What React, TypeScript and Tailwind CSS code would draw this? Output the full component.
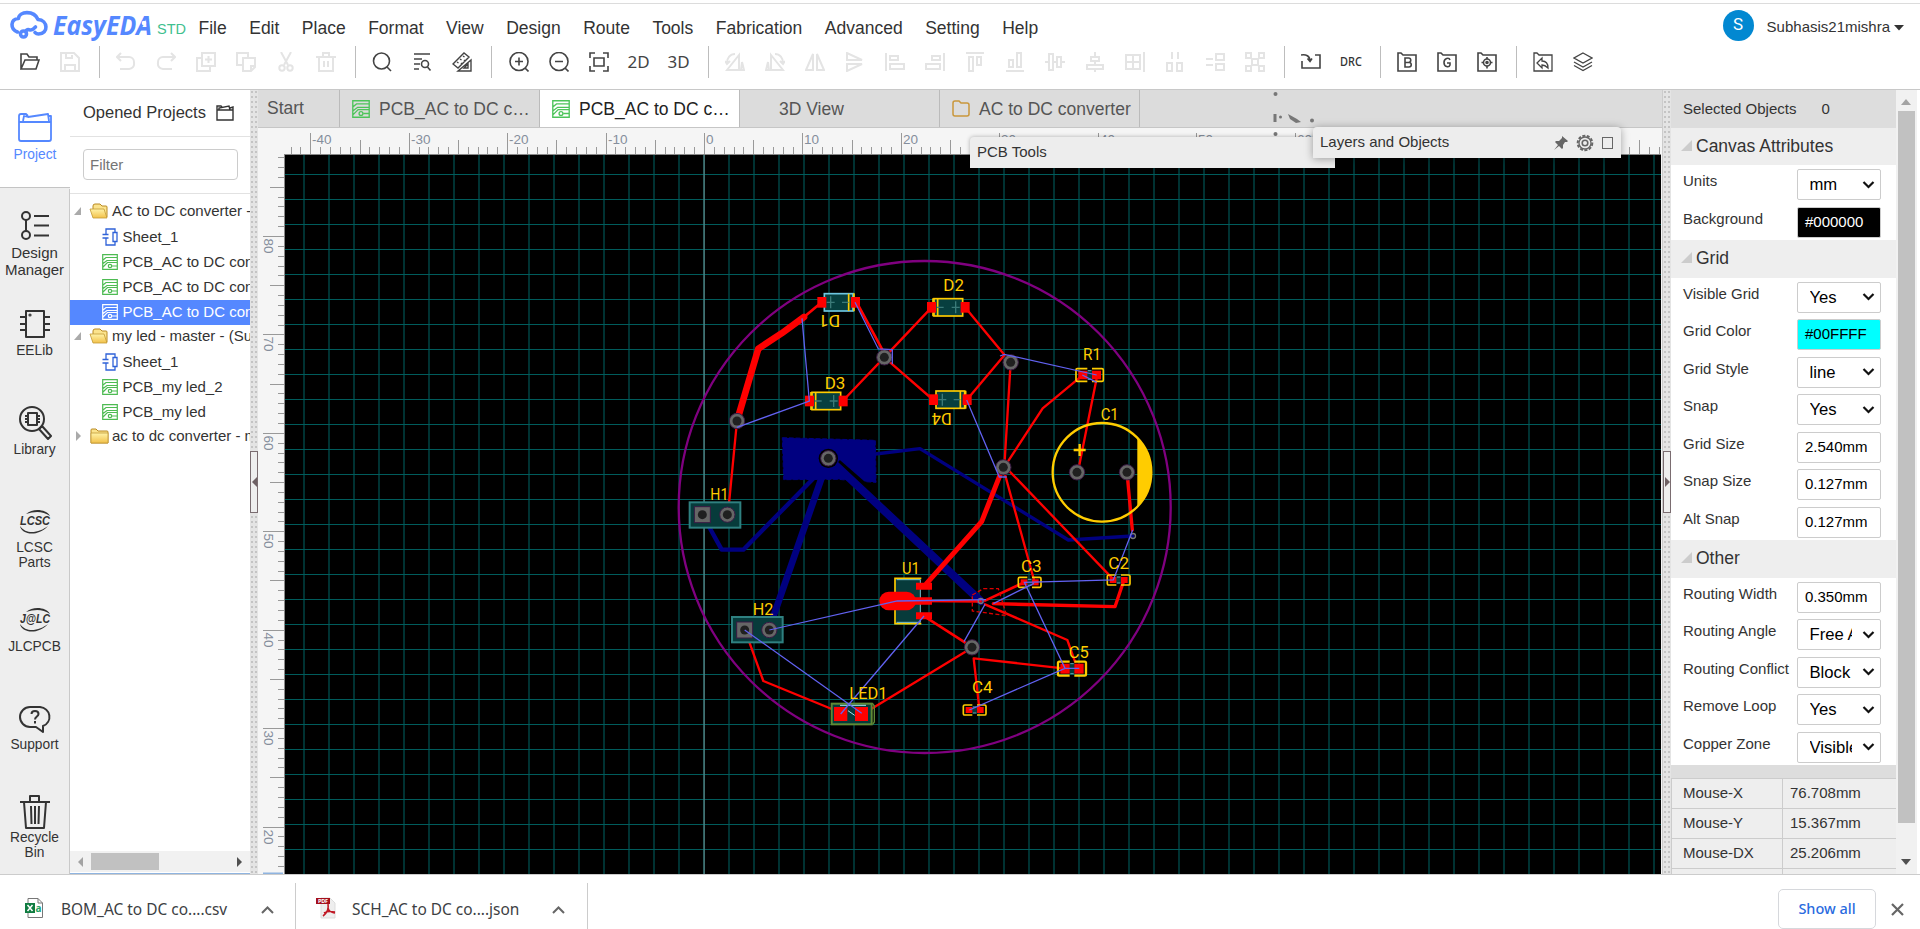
import React, { ReactNode } from 'react';

const menus = ['File', 'Edit', 'Place', 'Format', 'View', 'Design', 'Route', 'Tools', 'Fabrication', 'Advanced', 'Setting', 'Help'];

function Ico({ children, off = false }: { children: ReactNode; off?: boolean }) {
  return (
    <div className={`flex h-8 w-10 items-center justify-center ${off ? 'text-[#e4e4e4]' : 'text-[#444]'}`}>
      <svg width="20" height="20" viewBox="0 0 20 20" fill="none" stroke="currentColor" strokeWidth={off ? 2 : 1.6}>
        {children}
      </svg>
    </div>
  );
}

function Divider() {
  return <div className="mr-[6.2px] ml-[9px] h-8 w-px bg-[#bdbdbd]" />;
}

function Toolbar() {
  return (
    <div className="flex h-[44px] items-start pl-[10px]">
      <Ico><path d="M1 17V2h6l2 3h8v3M1 17l4-9h14l-3 9z" /></Ico>
      <Ico off><path d="M1 1h13l5 5v13H1zM5 19v-6h10v6M6 1v5h6V3" /></Ico>
      <Divider />
      <Ico off><path d="M5 1 1 5l4 4M1 5h12a5 5 0 0 1 5 5v1a5 5 0 0 1-5 6H4" /></Ico>
      <Ico off><path d="m15 1 4 4-4 4M19 5H7a5 5 0 0 0-5 5v1a5 5 0 0 0 5 6h9" /></Ico>
      <Ico off><path d="M6 1h13v13H6zM6 6H1v13h13v-5M12.500 4v7M9 7.500h7" /></Ico>
      <Ico off><path d="M12 6V1H1v12h6M7 6h12v9l-4 4H7zM19 14h-4v5" /></Ico>
      <Ico off><path d="M5 0l7 13M15 0L8 13" /><circle cx="6" cy="16" r="2.700" /><circle cx="14" cy="16" r="2.700" /></Ico>
      <Ico off><path d="M0 5h20M7 5V1h6v4M3 5v14h14V5M8 9v6M12 9v6" /></Ico>
      <Divider />
      <Ico><circle cx="9.500" cy="9" r="8" /><path d="m15 15 4 4" /></Ico>
      <Ico><path d="M2 2h16M2 7h8M2 12h6M2 17h5" /><circle cx="13" cy="12" r="3.500" /><path d="m15.500 15 3 3.500" /></Ico>
      <Ico><path d="M1 12 12 1l5 4L6 16zM6 19h13V8zM12 16h4v-4zM5 10l1.500 1M8 7l1.500 1M11 4l1.500 1M9 11l1 1M12 8l1 1" strokeWidth="1.400" /></Ico>
      <Divider />
      <Ico><circle cx="10" cy="9.500" r="9" /><path d="m16 16 3.500 3.500M10 5.500v8M6 9.500h8" /></Ico>
      <Ico><circle cx="10" cy="9.500" r="9" /><path d="m16 16 3.500 3.500M6 9.500h8" /></Ico>
      <Ico><path d="M1 6V1h5M14 1h5v5M19 14v5h-5M6 19H1v-5M5 6h10v8H5z" /></Ico>
      <div className="flex h-8 w-10 items-center justify-center font-['Noto_Sans'] text-[17px] text-[#444]">2D</div>
      <div className="flex h-8 w-10 items-center justify-center font-['Noto_Sans'] text-[17px] text-[#444]">3D</div>
      <Divider />
      <Ico off><path d="M14 3v15H2zM17 10l2 8h-3zM2 11c0-5 3-9 8-9M0 9l2 3 3-3" /></Ico>
      <Ico off><path d="M6 3v15h12zM3 10l-2 8h3zM18 11c0-5-3-9-8-9M20 9l-2 3-3-3" /></Ico>
      <Ico off><path d="M8 2v16H1zM12 2v16h7z" /></Ico>
      <Ico off><path d="M2 8V1l15 7zM2 12v7l15-7z" /></Ico>
      <Ico off><path d="M1 1v18M5 4h8v4H5zM5 12h14v5H5z" /></Ico>
      <Ico off><path d="M19 1v18M7 4h8v4H7zM1 12h14v5H1z" /></Ico>
      <Ico off><path d="M1 1h18M4 5v14h4V5zM12 5v8h4V5z" /></Ico>
      <Ico off><path d="M1 19h18M12 1v14h4V1zM4 8v7h4V8z" /></Ico>
      <Ico off><path d="M4 2v16h4V2zM12 5v10h4V5zM0 10h4M8 10h4M16 10h4" /></Ico>
      <Ico off><path d="M6 5h8v4H6zM2 13h16v4H2zM10 0v5M10 9v4M10 17v3" /></Ico>
      <Ico off><path d="M1 3h14v14H1zM1 10h14M8 3v14M19 0v20" /></Ico>
      <Ico off><path d="M2 11h5v8H2zM12 11h5v8h-5zM7 0v7M13 0v7" /></Ico>
      <Ico off><path d="M11 2h8v6h-8zM11 12h8v6h-8zM1 7h7M1 13h7" /></Ico>
      <Ico off><path d="M1 1h5v5H1zM14 1h5v5h-5zM1 14h5v5H1zM14 14h5v5h-5zM7 7h6v6H7zM6 6l1 1M14 6l-1 1M6 14l1-1M14 14l-1-1" /></Ico>
      <Divider />
      <Ico><path d="M1 9v7h18V3h-5M0 3c5-1 9 1 9 6M6.500 6.500 9 9.500l2-3" /></Ico>
      <div className="flex h-8 w-10 items-center justify-center"><span className="inline-block origin-center scale-x-[0.84] font-['Noto_Sans'] text-[13px] font-medium text-[#333]">DRC</span></div>
      <Divider />
      <Ico><path d="M1 19V1h3l2 2h13v16zM8 6h3.500a2 2 0 0 1 0 4.500H8zM8 10.500h4a2 2 0 0 1 0 4.500H8z" /></Ico>
      <Ico><path d="M1 19V1h3l2 2h13v16zM13 8c-1-3-6-2-6 2.500s5 5.500 6 2.500v-2h-3" /></Ico>
      <Ico><path d="M1 19V1h3l2 2h13v16zM10 5v2M10 14v2.500M4.500 10.500h2M13.500 10.500h2" /><circle cx="10" cy="10.500" r="3.500" /><circle cx="10" cy="10.500" r="1" fill="currentColor" /></Ico>
      <Divider />
      <Ico><path d="M1 19V1h3l2 2h13v16zM9 6v3c4 0 6 3 6 7-2-2-3-3-6-3v3l-5-5z" strokeWidth="1.300" /></Ico>
      <Ico><path d="m10 1 9 5-9 5-9-5zM1 10l9 5 9-5M1 13.500l9 5 9-5" strokeWidth="1.300" /></Ico>
    </div>
  );
}

function Header() {
  return (
    <header className="h-[90px] shrink-0 border-b border-[#c8c8c8]">
      <div className="mt-[3px] flex h-[43px] border-t border-[#dcdcdc]">
        <svg width="191" height="41" viewBox="0 4 191 41" className="shrink-0">
          <g fill="none" stroke="#5588ff" strokeWidth="3.600" strokeLinecap="round" strokeLinejoin="round">
            <path d="M17.500 32C10 29 10 19 18.500 18.500C19 11 34 10 38 19.500C48 20 49 34 38.500 34Q36.500 34 35 32.500" />
            <circle cx="23.500" cy="34" r="3" />
            <path d="M25.500 31.500Q27 28.500 30 30Q32 30.500 35.500 27" />
          </g>
          <text x="53" y="34.500" textLength="99" lengthAdjust="spacingAndGlyphs" className="fill-[#5588ff] font-['Open_Sans'] text-[27px] font-bold italic">EasyEDA</text>
          <circle cx="144" cy="23" r="2.300" fill="#fff" />
          <text x="157" y="34" className="fill-[#3fc08f] font-['Liberation_Sans'] text-[14.5px]">STD</text>
        </svg>
        <nav className="flex gap-[22.5px] pt-[12px] pl-[7.5px] text-[17.5px] leading-[24px] text-[#333]">
          {menus.map((m) => <span key={m}>{m}</span>)}
        </nav>
        <div className="mt-[5px] mr-[16px] ml-auto flex h-8 items-center">
          <span className="flex size-[31px] items-center justify-center rounded-full bg-[#0288d1] font-['Roboto'] text-[17px] text-white">S</span>
          <span className="ml-[13px] pt-1 text-[15px] text-[#333]">Subhasis21mishra</span>
          <svg width="10" height="6" className="mt-[5px] ml-[4px]"><path d="M0 0h10L5 5.500z" fill="#333" /></svg>
        </div>
      </div>
      <Toolbar />
    </header>
  );
}

const line = 'flex flex-col items-center';
function NavItem({ pad, label, icon, sel, cls = 'text-[13.75px] leading-[15px]' }: { pad: string; label: string[]; icon: ReactNode; sel?: boolean; cls?: string }) {
  return (
    <div className={`${line} ${pad} h-[98px] ${sel ? 'mb-px -mt-px border-b border-[#c4c4c4] bg-white text-[#5588ff]' : 'border-r border-[#c9c9c9] text-[#333]'}`}>
      {icon}
      {label.map((l) => <span key={l} className={cls}>{l}</span>)}
    </div>
  );
}
const S = ({ w, h, children, mb }: { w: number; h: number; children: ReactNode; mb: string }) => (
  <svg width={w} height={h} viewBox={`0 0 ${w} ${h}`} fill="none" stroke="currentColor" strokeWidth="2" strokeLinejoin="round" className={`shrink-0 ${mb}`}>{children}</svg>
);

function SideNav() {
  return (
    <div className="w-[70px] shrink-0 bg-[#eee] pt-px">
      <NavItem sel pad="pt-[22px]" label={['Project']} icon={<S w={36} h={31} mb="mb-[4px]"><path d="M2 10V4q0-2 2-2h5l2 2M2 10h32v17q0 2-2 2H4q-2 0-2-2zM6 9l1-5 4 1 20-3 1 7M32 4h2v6" strokeWidth="1.800" /></S>} />
      <NavItem pad="pt-[22px]" label={['Design', 'Manager']} cls="text-[15px] leading-[17px]" icon={<S w={30} h={30} mb="mb-[3px]"><circle cx="6" cy="5" r="4" /><circle cx="6" cy="24" r="4" /><path d="M6 9v11M14 5h15M14 14.500h15M14 24.500h15" /></S>} />
      <NavItem pad="pt-[22px]" label={['EELib']} icon={<S w={32} h={30} mb="mb-[4px]"><path d="M7 2h18v26H7zM1 8h6M1 15h6M1 21h6M25 8h6M25 15h6M25 21h6" /><circle cx="11" cy="6" r=".6" /></S>} />
      <NavItem pad="pt-[20px]" label={['Library']} icon={<S w={34} h={36} mb="mb-[1px]"><circle cx="14" cy="14" r="12" /><path d="M10 8h9v12h-9zM7 11h3M7 14h3M7 17h3M19 11h3M19 14h3M19 17h3M21 24l3-3 9 10-3 3z" /></S>} />
      <NavItem pad="pt-[27px]" label={['LCSC', 'Parts']} icon={<Orbit t="LCSC" mb="mb-[5px]" />} />
      <NavItem pad="pt-[27px]" label={['JLCPCB']} icon={<Orbit t="J@LC" mb="mb-[6px]" />} />
      <NavItem pad="pt-[26px]" label={['Support']} icon={<S w={34} h={29} mb="mb-[3px]"><path d="M12 2h10a11 10 0 0 1 3 19v6l-7-5h-6a10 10 0 0 1 0-20z" /><path d="M13.500 9c0-4 7-4 7 0 0 2.500-3.500 2.500-3.500 5.500M17 16v2.500" /></S>} />
      <NavItem pad="pt-[17px]" label={['Recycle', 'Bin']} icon={<S w={32} h={36} mb="mb-0"><path d="M1 8h30M11 8V2h9v6M5 8l2 26h18l2-26M12 12l.5 18M16 12v18M20 12l-.5 18" /></S>} />
    </div>
  );
}

function Orbit({ t, mb }: { t: string; mb: string }) {
  return (
    <svg width="32" height="25" viewBox="0 0 32 25" className={mb}>
      <path d="M7 4C14-2 27-1 31 6 24 1 16 1 7 4zM1 16c1 8 17 12 28 0-8 6-21 10-28 0z" fill="#333" />
      <text x="1" y="15" textLength="30" lengthAdjust="spacingAndGlyphs" className="fill-[#333] font-['Liberation_Sans'] text-[12.5px] font-bold italic">{t}</text>
    </svg>
  );
}

function PcbIcon({ c, s = 16 }: { c: string; s?: number }) {
  return (
    <svg width={s} height={s} viewBox="0 0 16 16" fill="none" stroke={c} strokeWidth="1.200" className="shrink-0">
      <path d="M.7.7h14.600v14.600H.700zM1 6l3-2.500h11M1 9.500 5 6.500h10M1 13l4.500-4.500H15M10 12h5" /><circle cx="8" cy="12" r="1.700" />
    </svg>
  );
}
function SheetIcon() {
  return (
    <svg width="16" height="18" viewBox="0 0 16 18" fill="none" stroke="#2f62d8" strokeWidth="1.300" className="shrink-0">
      <path d="M11 4.500h4v9h-4zM13 4V1H4v5.500M.500 6.500h6M.500 10h6M4 10v7h9v-3" />
    </svg>
  );
}
function Folder({ open }: { open?: boolean }) {
  return (
    <svg width="20" height="16" viewBox="0 0 20 16" className="shrink-0">
      <defs><linearGradient id="fg" x1="0" x2="0" y1="0" y2="1"><stop offset="0" stopColor="#fff3a8" /><stop offset="1" stopColor="#f2c14a" /></linearGradient></defs>
      <path d={open ? 'M4 13V3q0-2 2-2h5l2 2h4q1 0 1 1v10z' : 'M2 15V2q0-1 1-1h4l2 2h9q1 0 1 1v11z'} fill="#fbe38d" stroke="#b98a22" />
      <path d={open ? 'M1 6h14l3 9H4z' : 'M2 5h17v10H2z'} fill="url(#fg)" stroke="#c39a35" strokeWidth=".8" />
    </svg>
  );
}

const tree = [
  ['o', 'AC to DC converter - master'], ['s', 'Sheet_1'], ['p', 'PCB_AC to DC converter'], ['p', 'PCB_AC to DC converter'], ['a', 'PCB_AC to DC converter'],
  ['o', 'my led - master - (Subhasis)'], ['s', 'Sheet_1'], ['p', 'PCB_my led_2'], ['p', 'PCB_my led'], ['c', 'ac to dc converter - master'],
];

function ProjectPanel() {
  return (
    <div className="flex w-[180px] shrink-0 flex-col overflow-hidden border-b border-[#8fb4e0] bg-white">
      <div className="flex h-[47px] items-center border-b border-[#e2e2e2] pb-[2px] pl-[13px]">
        <span className="text-[16.5px] text-[#333]">Opened Projects</span>
        <svg width="18" height="16" viewBox="0 0 18 16" className="mt-[2px] ml-[10px]" fill="none" stroke="#333" strokeWidth="1.400"><path d="M1 5h16v10H1zM1 5V1h4l1 1M3 5V3l10-2 1 4M14 3l3-1v3" /></svg>
      </div>
      <div className="h-[57px] shrink-0 border-b border-[#e2e2e2] pt-[12px] pl-[13px]">
        <div className="h-[31px] w-[155px] rounded-[4px] border border-[#ccc] pl-[6px] text-[15px] leading-[29px] text-[#757575]">Filter</div>
      </div>
      <div className="flex-1 pt-[6px]">
        {tree.map(([k, t], i) => {
          const root = k === 'o' || k === 'c';
          return (
            <div key={i} className={`flex h-[25px] items-center whitespace-nowrap text-[15px] ${k === 'a' ? 'bg-[#5588ff] text-white' : 'text-[#333]'} ${root ? 'pb-[3px] pl-[4px]' : 'pb-[1px] pl-[32px]'}`}>
              {root && <svg width="8" height="10" className="mr-[7px] shrink-0"><path d={k === 'o' ? 'M7 1v8H0z' : 'M2 0v10l5-5z'} fill="#aaa" /></svg>}
              {root ? <Folder open={k === 'o'} /> : k === 's' ? <SheetIcon /> : <PcbIcon c={k === 'a' ? '#fff' : '#4dbb52'} />}
              <span className={root ? 'ml-[3px]' : 'ml-[4.500px]'}>{t}</span>
            </div>
          );
        })}
      </div>
      <div className="mb-px flex h-[21px] items-center bg-[#f1f1f1]">
        <svg width="5" height="10" className="ml-[8px]"><path d="M5 0v10L0 5z" fill="#a3a3a3" /></svg>
        <div className="ml-[8px] h-[17px] w-[68px] bg-[#c1c1c1]" />
        <svg width="5" height="10" className="ml-[78px]"><path d="M0 0v10l5-5z" fill="#505050" /></svg>
      </div>
    </div>
  );
}

function Splitter({ dir }: { dir: 'l' | 'r' }) {
  return (
    <div className="flex w-2 shrink-0 items-start bg-[#e4e4e4] bg-[radial-gradient(circle_at_2px_2px,#c4c4c4_1px,transparent_1.2px)] bg-size-[4px_5px] pt-[361px]">
      <div className="flex h-[62px] w-2 items-center justify-center border border-[#7a6c70] bg-[#eee]">
        <svg width="5" height="10"><path d={dir === 'l' ? 'M5 0v10L0 5z' : 'M0 0v10l5-5z'} fill="#6e6064" /></svg>
      </div>
    </div>
  );
}

function Tab({ label, icon, active }: { label: string; icon?: ReactNode; active?: boolean }) {
  return (
    <div className={`flex w-[200px] shrink-0 items-center border-r border-[#bbb] pl-[12px] ${active ? 'bg-white text-[#222]' : 'text-[#555]'}`}>
      <span className="flex w-[27px] shrink-0">{icon}</span>
      <span className="whitespace-nowrap">{label}</span>
    </div>
  );
}

type Seg = [string, number];
const blue: Seg[] = [
  ['M616 612 750 596 1195 870 1388 858', 10],
  ['M106 810 155 899H220L475 640', 13],
  ['M470 640 310 1100 298 1140', 20],
  ['M475 625 932 1053', 24],
];
const red: Seg[] = [
  ['M201 513 265 296 335 250 402 201', 20], ['M402 201 455 157', 8], ['M201 513 178 750 172 790', 7],
  ['M560 157 643 310', 8], ['M643 322 785 172', 7], ['M643 322 518 453', 7], ['M643 322 790 450', 7],
  ['M885 172 1003 314', 7], ['M1003 316 890 450', 7], ['M1022 337 1003 650', 7],
  ['M1230 382 1118 475 1010 640', 7], ['M1280 385 1225 660', 7],
  ['M998 655 935 815 770 1000', 15], ['M1000 655 1092 990', 7], ['M1010 655 1330 988', 7],
  ['M1371 667 1387 840', 10], ['M1362 990 1335 1070 970 1061', 10], ['M1063 997 945 1052', 8],
  ['M762 1053 932 1054', 8], ['M945 1063 1192 1170 1215 1235', 7], ['M770 1104 895 1184', 8],
  ['M885 1206 590 1385', 7], ['M1180 1255 911 1225 928 1375', 7], ['M232 1160 280 1293 500 1383', 7],
];
const rats = [
  'M555 157 625 297 667 299V343', 'M396 205 418 453 201 532', 'M990 318 1003 313 1280 375M1237 375 1280 397',
  'M890 450 988 681H1010', 'M1388 840 1330 990 1063 997 1185 1255H1228M1185 1255 898 1380', 'M1092 1000 970 1061',
  'M298 1140 682 1053 948 1049M945 1063 882 1175', 'M762 1098 512 1392', 'M224 1140 575 1390',
];
const pads = [[643, 322], [1022, 337], [201, 513], [475, 625], [1000, 652], [1221, 667], [1371, 667], [906, 1192], [172, 794], [298, 1140]];
const names: [string, number, number, number][] = [
  ['D2', 820, 123, 62], ['R1', 1239, 330, 54], ['D3', 464, 416, 62], ['C1', 1292, 510, 54], ['H1', 121, 750, 54], ['U1', 696, 971, 53],
  ['H2', 248, 1094, 62], ['C3', 1053, 966, 62], ['C2', 1315, 957, 62], ['C5', 1196, 1225, 60], ['C4', 906, 1330, 62], ['LED1', 538, 1346, 114],
];

function Diode({ x, y, flip, hi }: { x: number; y: number; flip?: boolean; hi?: boolean }) {
  const b = flip ? 30 : -32;
  return (
    <g>
      <rect x={x - 43} y={y - 26} width="86" height="52" fill="#073f3f" stroke={hi ? '#6ec6e0' : '#ffcc00'} strokeWidth="5" />
      <path d={`M${x + b} ${y - 26}v52M${x + (flip ? 46 : -46)} ${y - 27}v12m0 30v12`} stroke="#ffcc00" strokeWidth="5" />
      <path d={`M${x + (flip ? 10 : -34)} ${y}h20M${x + (flip ? -36 : 10)} ${y}h24m-12-18v36`} stroke="#3b7a78" strokeWidth="4" />
      <rect x={x - 64} y={y - 16} width="27" height="32" fill="#f00" />
      <rect x={x + 37} y={y - 16} width="27" height="32" fill="#f00" />
    </g>
  );
}

function Chip({ x, y, w = 68, h = 30, s = 5 }: { x: number; y: number; w?: number; h?: number; s?: number }) {
  const l = x - w / 2, r = x + w / 2, t = y - h / 2, b = y + h / 2;
  return (
    <g>
      <path d={`M${x - 7} ${t}H${l + 4}q-4 0-4 4V${b - 4}q0 4 4 4H${x - 7}M${x + 7} ${t}H${r - 4}q4 0 4 4V${b - 4}q0 4-4 4H${x + 7}`} fill="none" stroke="#ffcc00" strokeWidth={s} />
      <rect x={x - 8} y={t + 4} width="16" height={h - 8} fill="#073b3b" />
      <path d={`M${x - 5} ${t + 6}h10M${x - 5} ${b - 6}h10`} stroke="#8adcf0" strokeWidth="2" />
      <rect x={l + 7} y={t + 6} width={w / 2 - 14} height={h - 12} fill="#f00" />
      <rect x={x + 7} y={t + 6} width={w / 2 - 14} height={h - 12} fill="#f00" />
    </g>
  );
}

function Board() {
  const cols = Array.from({ length: 55 }, (_, i) => 304 + 25 * i);
  const rows = Array.from({ length: 28 }, (_, i) => 174 + 25 * i);
  const xt = Array.from({ length: 140 }, (_, i) => i - 42);
  const yt = Array.from({ length: 73 }, (_, i) => 88 - i);
  return (
    <svg width="1404" height="746" viewBox="258 128 1404 746" className="block">
      <rect x="258" y="128" width="1404" height="746" fill="#f5f5f5" />
      {xt.map((n) => {
        const x = Math.round(704 + n * 9.8425);
        const major = n % 10 === 0;
        return (
          <g key={n}>
            <rect x={x} y={major ? 133 : n % 5 === 0 ? 140 : 147} width="1" height={major ? 21 : n % 5 === 0 ? 14 : 7} fill="#999" />
            {major && <text x={x + 2} y="143.500" className="fill-[#858e9c] font-['Liberation_Sans'] text-[13.5px]">{n}</text>}
          </g>
        );
      })}
      {yt.map((n) => {
        const y = Math.round(236 + (80 - n) * 9.8425);
        const major = n % 10 === 0;
        return y > 155 && y < 872 && (
          <g key={n}>
            <rect x={major ? 263 : n % 5 === 0 ? 270 : 278} y={y} width={major ? 21 : n % 5 === 0 ? 14 : 6} height="1" fill="#999" />
            {major && <text transform={`translate(264 ${y + 2.5}) rotate(90)`} className="fill-[#858e9c] font-['Liberation_Sans'] text-[13.5px]">{n}</text>}
          </g>
        );
      })}
      <rect x="263" y="872.500" width="20" height="1.500" fill="#8fb4e0" />
      <rect x="284" y="154" width="1377" height="720" fill="#888" />
      <rect x="285" y="155" width="1376" height="719" fill="#000" />
      {cols.map((x) => <rect key={x} x={x - 0.5} y="155" width="1" height="719" fill="#006464" />)}
      {rows.map((y) => <rect key={y} x="285" y={y} width="1376" height="1" fill="#005c5c" />)}
      <rect x="703.500" y="155" width="1.200" height="719" fill="#5f8a8c" />
      <circle cx="924.700" cy="507" r="246" fill="none" stroke="#800080" strokeWidth="2.300" />
      <g transform="translate(670 250) scale(0.33333)" fill="none">
        <path d="M337 563 616 571 618 697 570 694 505 688 341 689z" fill="#000080" stroke="#000080" strokeWidth="3" strokeDasharray="14 6" />
        <path d="M505 635 585 705" stroke="#000" strokeWidth="14" />
        <g stroke="#000080" strokeLinejoin="round" strokeLinecap="round">
          {blue.map(([d, w]) => <path key={d} d={d} strokeWidth={w} />)}
        </g>
        <circle cx="475" cy="625" r="29" fill="#000" />
        <g stroke="#f00" strokeLinejoin="round" strokeLinecap="round">
          {red.map(([d, w]) => <path key={d} d={d} strokeWidth={w} />)}
        </g>
        <path d="M907 1035 940 1016H985L1010 1097 907 1083z" stroke="#d00" strokeWidth="4" strokeDasharray="12 7" />
        <circle cx="1296" cy="667" r="148" stroke="#ffcc00" strokeWidth="7" />
        <path d="M1402 563A149 149 0 0 1 1402 771z" fill="#ffcc00" />
        <path d="M1211 600h36M1229 582v36" stroke="#ffcc00" strokeWidth="7" />
        <rect x="59" y="757" width="152" height="76" fill="#073b3b" stroke="#2f8080" strokeWidth="6" />
        <rect x="186" y="1101" width="152" height="76" fill="#073b3b" stroke="#2f8080" strokeWidth="6" />
        <Diode x={506} y={157} flip hi />
        <Diode x={835} y={172} />
        <Diode x={469} y={453} />
        <Diode x={841} y={449} flip />
        <Chip x={1259} y={375} w={82} h={38} />
        <Chip x={1079} y={997} />
        <Chip x={1346} y={990} />
        <Chip x={914} y={1380} />
        <Chip x={1206} y={1256} w={84} h={42} s={7} />
        <rect x="675" y="986" width="77" height="134" fill="#073b3b" />
        <path d="M675 1030V985H754M675 1075V1121H754" stroke="#ffcc00" strokeWidth="5" />
        <path d="M680 989H751V1117H680" stroke="#8adcf0" strokeWidth="2.500" />
        <rect x="628" y="1025" width="110" height="56" rx="28" fill="#f00" />
        <path d="M738 998h48v21h-48zM730 1042h56v22h-56zM738 1087h48v21h-48z" fill="#f00" />
        <rect x="485" y="1361" width="120" height="62" fill="#073b3b" stroke="#5f8a35" strokeWidth="6" />
        <path d="M600 1361h8l5 7v48l-5 7" stroke="#5f8a35" strokeWidth="4" />
        <path d="M492 1371h40v42h-40zM555 1371h39v42h-39z" fill="#f00" />
        <path d="M510 1366h78M534 1382l20 14" stroke="#a6e4f0" strokeWidth="3" />
        {pads.map(([x, y]) => (
          <g key={`${x}-${y}`}>
            <circle cx={x} cy={y} r="23" fill="#666" stroke="#3a1a44" strokeWidth="3" />
            <circle cx={x} cy={y} r="13.500" fill="#202020" />
          </g>
        ))}
        {[[97, 794], [224, 1140]].map(([x, y]) => (
          <g key={x}>
            <rect x={x - 24} y={y - 24} width="48" height="48" fill="#666" stroke="#3a1a44" strokeWidth="3" />
            <circle cx={x} cy={y} r="13.500" fill="#202020" />
          </g>
        ))}
        <circle cx="1389" cy="858" r="7.500" stroke="#777" strokeWidth="4" />
        <circle cx="932" cy="1053" r="7.500" stroke="#777" strokeWidth="4" />
        <g stroke="#6262f2" strokeWidth="3.800">{rats.map((d) => <path key={d} d={d} />)}</g>
        <g className="fill-[#ffcc00] font-['Roboto'] text-[50px]">
          {names.map(([t, x, y, w]) => <text key={t} x={x} y={y} textLength={w} lengthAdjust="spacingAndGlyphs">{t}</text>)}
          <text transform="translate(511 195) rotate(180)" textLength="66" lengthAdjust="spacingAndGlyphs">D1</text>
          <text transform="translate(845 488) rotate(180)" textLength="60" lengthAdjust="spacingAndGlyphs">D4</text>
        </g>
      </g>
    </svg>
  );
}

function Editor() {
  return (
    <main className="relative w-[1404px] shrink-0">
      <div className="flex h-[38px] border-b border-[#c6c6c6] bg-[#dcdcdc] text-[17.5px] leading-[36px]">
        <div className="w-[82px] shrink-0 border-r border-[#bbb] pl-[9px] text-[#555]">Start</div>
        <Tab label="PCB_AC to DC c…" icon={<PcbIcon c="#4dc45a" s={18} />} />
        <Tab active label="PCB_AC to DC c…" icon={<PcbIcon c="#4dc45a" s={18} />} />
        <Tab label="3D View" />
        <Tab label="AC to DC converter" icon={<svg width="18" height="17" viewBox="0 0 18 17" fill="none" stroke="#c9973b" strokeWidth="1.500"><path d="M1 14V3q0-2 2-2h4l2 2h6q2 0 2 2v9q0 2-2 2H3q-2 0-2-2z" /></svg>} />
      </div>
      <Board />
      <svg width="60" height="70" className="absolute top-0 left-[1010px]" fill="#777">
        <circle cx="7.500" cy="4" r="2" /><path d="M5.500 24h3v8h-3z" /><circle cx="12.500" cy="27" r="1.500" /><path d="m20 24 9 5 4 3-5 1-6-4z" /><circle cx="44" cy="30.500" r="2" /><circle cx="7.500" cy="44" r="2" />
      </svg>
      <div className="absolute top-[47px] left-[712px] h-[31px] w-[365px] rounded-t-[4px] bg-[#ededed] pl-[7px] text-[15px] leading-[29px] text-[#333] shadow-[0_0_4px_rgba(0,0,0,0.3)]">PCB Tools</div>
      <div className="absolute top-[37px] left-[1055px] flex h-[31px] w-[308px] items-center rounded-t-[4px] bg-[#ededed] pl-[7px] text-[15px] text-[#333] shadow-[0_1px_8px_rgba(0,0,0,0.35)]">
        Layers and Objects
        <svg width="16" height="16" viewBox="0 0 16 16" className="ml-auto" fill="#666"><path d="m9 1 6 5-1 1-2 0-2 3v3l-1 1-3-3-5 4 4-5-3-3 1-1h3l3-3z" /></svg>
        <svg width="18" height="18" viewBox="0 0 18 18" className="ml-[7px]" fill="none" stroke="#666"><circle cx="9" cy="9" r="7.300" strokeWidth="2" strokeDasharray="3 1.500" /><circle cx="9" cy="9" r="6" strokeWidth="1.300" /><circle cx="9" cy="9" r="2.800" strokeWidth="1.600" /></svg>
        <span className="mr-[8px] ml-[8px] h-[12px] w-[11px] border-[1.5px] border-[#666]" />
      </div>
    </main>
  );
}

function Head({ t, h }: { t: string; h: string }) {
  return (
    <div className={`flex ${h} items-center bg-[#eee] pb-px pl-[10px] text-[17.5px] text-[#333]`}>
      <svg width="11" height="11" className="mr-[4px] mb-[2px]"><path d="M11 0v11H0z" fill="#ccc" /></svg>
      <span>{t}</span>
    </div>
  );
}
function Prop({ l, v, sel, box = 'bg-white text-black' }: { l: string; v: string; sel?: boolean; box?: string }) {
  return (
    <div className="flex h-[37.5px] items-start pt-[4px] pl-[12px]">
      <span className="w-[114px] shrink-0 text-[15px] leading-[24px] whitespace-nowrap text-[#333]">{l}</span>
      <div className={`flex h-[31px] w-[84px] items-center rounded-[2px] border border-[#ccc] ${box} ${sel ? 'pl-[11.500px] text-[16.67px]' : 'pl-[7px] text-[15px]'}`}>
        <span className={sel ? 'w-[42px] overflow-hidden whitespace-nowrap' : ''}>{v}</span>
        {sel && <svg width="13" height="8" viewBox="0 0 13 8" className="ml-[10.5px]" fill="none" stroke="#111" strokeWidth="2.200"><path d="m1.500 1 5 5 5-5" /></svg>}
      </div>
    </div>
  );
}

function Inspector() {
  return (
    <div className="flex w-[249px] shrink-0 overflow-hidden bg-white">
      <div className="w-[225px] shrink-0">
        <div className="flex h-[38px] items-center bg-[#ddd] pl-[12px] text-[15px] text-[#333]">Selected Objects<span className="ml-[25px]">0</span></div>
        <Head t="Canvas Attributes" h="h-[37px]" />
        <Prop l="Units" v="mm" sel />
        <Prop l="Background" v="#000000" box="bg-black text-white" />
        <Head t="Grid" h="h-[37.500px]" />
        <Prop l="Visible Grid" v="Yes" sel />
        <Prop l="Grid Color" v="#00FFFF" box="bg-[#00ffff] text-black" />
        <Prop l="Grid Style" v="line" sel />
        <Prop l="Snap" v="Yes" sel />
        <Prop l="Grid Size" v="2.540mm" />
        <Prop l="Snap Size" v="0.127mm" />
        <Prop l="Alt Snap" v="0.127mm" />
        <Head t="Other" h="h-[37.500px]" />
        <Prop l="Routing Width" v="0.350mm" />
        <Prop l="Routing Angle" v="Free Angle" sel />
        <Prop l="Routing Conflict" v="Block" sel />
        <Prop l="Remove Loop" v="Yes" sel />
        <Prop l="Copper Zone" v="Visible" sel />
        <div className="h-[13px] bg-[#ddd]" />
        {[['Mouse-X', '76.708mm'], ['Mouse-Y', '15.367mm'], ['Mouse-DX', '25.206mm'], ['', '']].map(([a, b]) => (
          <div key={a} className="flex h-[30px] border-t border-l border-[#ccc] bg-[#eee] text-[15px] leading-[28px] text-[#333]">
            <span className="w-[111px] border-r border-[#ccc] pl-[11px]">{a}</span>
            <span className="pl-[7px]">{b}</span>
          </div>
        ))}
      </div>
      <div className="flex w-[21px] shrink-0 flex-col items-center bg-[#f1f1f1] pr-px">
        <svg width="10" height="6" className="mt-[9px]"><path d="M0 6h10L5 0z" fill="#a3a3a3" /></svg>
        <div className="mt-[6px] h-[712px] w-[17px] shrink-0 bg-[#c1c1c1]" />
        <svg width="10" height="6" className="mt-[36px] shrink-0"><path d="M0 0h10L5 6z" fill="#505050" /></svg>
      </div>
    </div>
  );
}

const Caret = () => <svg width="13" height="8" viewBox="0 0 13 8" fill="none" stroke="#666" strokeWidth="2"><path d="m1 7 5.500-5.500L12 7" /></svg>;

function Downloads() {
  return (
    <footer className="flex h-[55px] shrink-0 items-end border-t border-[#ccc] bg-white font-['Noto_Sans'] text-[15.45px] text-[#3c4043]">
      <div className="flex h-[46px] w-[296px] items-center border-r border-[#ccc] pt-[7px] pl-[25px]">
        <svg width="18" height="20" viewBox="0 0 18 20" className="mr-[18px] mb-[3px] shrink-0">
          <path d="M3 .5h10l4.500 4.500v14.500H3zM13 .5V5h4.500" fill="#fff" stroke="#777" />
          <rect y="5" width="10" height="10" fill="#107c41" />
          <path d="m2.500 7 5 6M7.500 7l-5 6" stroke="#fff" strokeWidth="1.500" />
          <text x="10.500" y="14" className="fill-[#21a366] font-['Noto_Sans'] text-[10px] font-bold">a</text>
        </svg>
        <span className="w-[200px] shrink-0 whitespace-nowrap">BOM_AC to DC co....csv</span>
        <Caret />
      </div>
      <div className="flex h-[46px] w-[292px] items-center border-r border-[#ccc] pt-[7px] pl-[20px]">
        <svg width="20" height="22" viewBox="0 0 20 22" className="mr-[16px] mb-[3px] shrink-0">
          <path d="M5 1h9l5 5v15H5z" fill="#eee" stroke="#ddd" />
          <path d="M0 1h14v6H0z" fill="#a5101c" />
          <text x="2" y="6" textLength="10" className="fill-white font-['Noto_Sans'] text-[5.5px] font-bold">PDF</text>
          <path d="M12 7c1 5-1 9-5 12M12 11c1 4 3 4 7 5M8 16c3-2 6-2 11-1" fill="none" stroke="#c01825" strokeWidth="1.600" />
        </svg>
        <span className="w-[200px] shrink-0 whitespace-nowrap">SCH_AC to DC co....json</span>
        <Caret />
      </div>
      <div className="ml-auto flex h-[40px] w-[98px] items-center justify-center rounded-[5px] border border-[#d6d8dc] pb-px text-[14.500px] font-medium text-[#2a6be0]">Show all</div>
      <svg width="13" height="13" viewBox="0 0 13 13" className="mr-[16px] mb-[13px] ml-[15px]" stroke="#666" strokeWidth="2.200"><path d="m1 1 11 11M12 1 1 12" /></svg>
    </footer>
  );
}

export default function App() {
  return (
    <div className="flex h-[929px] w-[1920px] flex-col overflow-hidden bg-white font-['Liberation_Sans',sans-serif]">
      <Header />
      <div className="flex h-[784px] shrink-0 overflow-hidden">
        <SideNav />
        <ProjectPanel />
        <Splitter dir="l" />
        <Editor />
        <div className="w-px shrink-0 bg-[#ccc]" />
        <Splitter dir="r" />
        <Inspector />
      </div>
      <Downloads />
    </div>
  );
}
